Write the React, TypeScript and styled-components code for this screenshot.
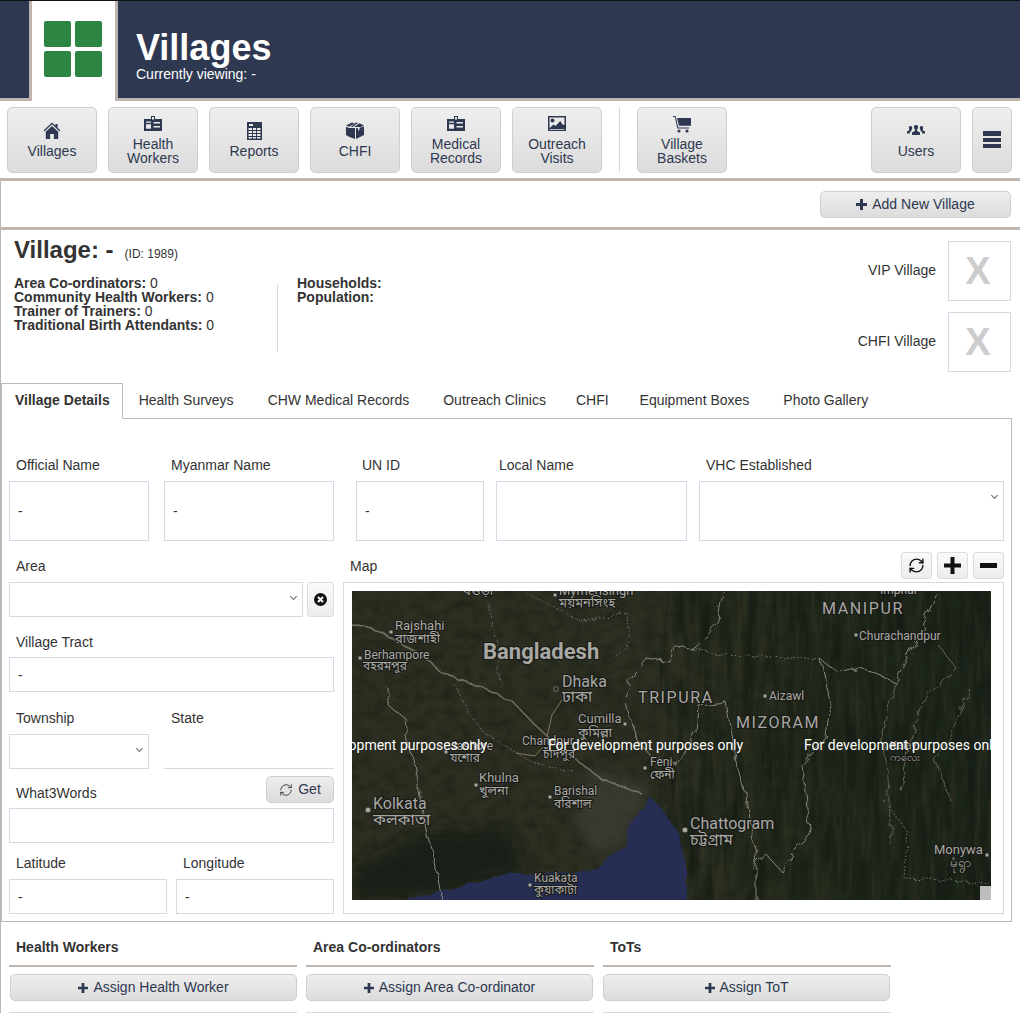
import React from 'react';
import styled, { createGlobalStyle } from 'styled-components';
import { RefreshCw } from 'lucide-react';

const TAN = '#bdb5ae';
const NAVY = '#2e3850';
const FIELD_LINE = '#d5dae6';

const GlobalStyle = createGlobalStyle`
	html, body {
		margin: 0;
		height: 1013px;
		overflow: hidden;
		background: #fff;
		font-family: 'Liberation Sans', Arial, sans-serif;
		font-size: 14px;
		color: #333;
	}
	* { box-sizing: border-box; }
`;

const Header = styled.header`
	display: flex;
	height: 101px;
	border-top: 1px solid #111;
	border-bottom: 3px solid ${TAN};
	background: ${NAVY};
`;

const LogoTile = styled.div`
	display: grid;
	grid-template-columns: 27px 27px;
	grid-template-rows: 26px 26px;
	gap: 4px;
	align-content: start;
	width: 89px;
	height: 100px;
	margin-left: 29px;
	padding: 20px 0 0 12px;
	border-left: 3px solid ${TAN};
	border-right: 3px solid ${TAN};
	background: #fff;
`;

const LogoCell = styled.span`
	background: #2d8544;
	border-radius: 2px;
`;

const HeaderText = styled.div`
	margin-left: 18px;
	padding-top: 28px;
	color: #fff;
`;

const PageTitle = styled.h1`
	margin: 0;
	font-size: 36px;
	line-height: 38px;
	font-weight: bold;
`;

const SubTitle = styled.div`
	font-size: 14px;
	line-height: 14px;
`;

const Nav = styled.nav`
	display: flex;
	height: 80px;
	padding: 6px 8px 0 7px;
	border-bottom: 3px solid ${TAN};
`;

const NavButton = styled.button<{ $w?: number; $ml?: number; $iconOnly?: boolean }>`
	display: flex;
	flex-direction: column;
	align-items: center;
	justify-content: center;
	width: ${(p) => p.$w ?? 90}px;
	height: 66px;
	margin-left: ${(p) => p.$ml ?? 0}px;
	padding: 0;
	border: 1px solid #cfcfcf;
	border-radius: 5px;
	background: linear-gradient(#eeeeee, #dcdcdc);
	color: ${NAVY};
	font: 14px/14px 'Liberation Sans', Arial, sans-serif;
	svg { display: block; margin-bottom: ${(p) => (p.$iconOnly ? 0 : 4)}px; fill: ${NAVY}; }
`;

const NavDivider = styled.span`
	width: 1px;
	height: 65px;
	margin-left: 17px;
	background: #d8d8d8;
`;

const ActionBar = styled.div`
	display: flex;
	justify-content: flex-end;
	height: 49px;
	padding: 10px 9px 0 0;
	border-left: 1px solid ${TAN};
	border-bottom: 3px solid ${TAN};
`;

const SmallButton = styled.button<{ $w?: number }>`
	display: flex;
	align-items: center;
	justify-content: center;
	gap: 5px;
	flex: none;
	width: ${(p) => (p.$w ? `${p.$w}px` : '100%')};
	height: 27px;
	padding: 0 0 2px;
	border: 1px solid #cfcfcf;
	border-radius: 5px;
	background: linear-gradient(#eeeeee, #dcdcdc);
	color: ${NAVY};
	font: 14px/14px 'Liberation Sans', Arial, sans-serif;
	svg { display: block; margin-top: 2px; }
`;

const Content = styled.main`
	height: 783px;
	padding-right: 8px;
	border-left: 1px solid ${TAN};
`;

const Info = styled.section`
	display: flex;
	justify-content: space-between;
	height: 153px;
	padding: 0 1px 0 13px;
`;

const InfoLeft = styled.div`
	padding-top: 6px;
`;

const VillageTitle = styled.h2`
	display: flex;
	align-items: baseline;
	margin: 0;
	font-size: 24px;
	line-height: 28px;
	font-weight: bold;
	small {
		margin-left: 11px;
		font-size: 12px;
		font-weight: normal;
	}
`;

const StatsRow = styled.div`
	display: flex;
	margin-top: 8px;
`;

const StatCol = styled.div`
	line-height: 14px;
	b { font-weight: bold; }
`;

const StatDivider = styled.span`
	width: 1px;
	height: 68px;
	margin: 8px 19px 0 0;
	background: #d9d9d9;
`;

const StatsMain = styled(StatCol)`
	width: 263px;
`;

const Flags = styled.div`
	display: flex;
	flex-direction: column;
	gap: 11px;
	padding-top: 11px;
`;

const FlagRow = styled.div`
	display: flex;
	align-items: center;
	justify-content: flex-end;
	gap: 12px;
`;

const FlagLabel = styled.span`
	margin-top: -2px;
`;

const FlagBox = styled.div`
	display: flex;
	align-items: center;
	justify-content: center;
	width: 63px;
	height: 60px;
	padding-right: 3px;
	border: 1px solid ${FIELD_LINE};
	color: #cccccc;
	font-size: 38px;
	font-weight: bold;
`;

const Tabs = styled.div`
	display: flex;
	height: 35px;
`;

const Tab = styled.div<{ $active?: boolean; $pl?: number; $pr?: number }>`
	position: relative;
	z-index: 1;
	height: ${(p) => (p.$active ? 36 : 35)}px;
	padding: 0 ${(p) => p.$pr ?? 16}px 0 ${(p) => p.$pl ?? 16}px;
	margin-right: ${(p) => (p.$active ? -1 : 0)}px;
	border: ${(p) => (p.$active ? '1px solid #bbb' : '1px solid transparent')};
	border-bottom: ${(p) => (p.$active ? '1px solid #fff' : '0')};
	background: ${(p) => (p.$active ? '#fff' : 'transparent')};
	line-height: 33px;
	font-weight: ${(p) => (p.$active ? 'bold' : 'normal')};
`;

const Panel = styled.section`
	height: 504px;
	padding: 38px 7px 0 7px;
	border: 1px solid #bbb;
`;

const FieldRow = styled.div`
	display: flex;
`;

const Field = styled.div<{ $w: number; $ml?: number; $mt?: number }>`
	flex: none;
	width: ${(p) => p.$w}px;
	margin-left: ${(p) => p.$ml ?? 0}px;
	margin-top: ${(p) => p.$mt ?? 0}px;
`;

const Label = styled.label<{ $pl?: number; $mb?: number }>`
	display: block;
	height: 16px;
	margin-bottom: ${(p) => p.$mb ?? 8}px;
	padding-left: ${(p) => p.$pl ?? 7}px;
	line-height: 16px;
	white-space: nowrap;
`;

const Input = styled.input<{ $h?: number; $line?: boolean }>`
	display: block;
	width: 100%;
	height: ${(p) => p.$h ?? 35}px;
	padding: 0 8px;
	border: ${(p) => (p.$line ? '0' : `1px solid ${FIELD_LINE}`)};
	border-bottom: 1px solid ${FIELD_LINE};
	outline: 0;
	background: #fff;
	color: #333;
	font: 14px 'Liberation Sans', Arial, sans-serif;
`;

const SelectBox = styled.div<{ $h?: number; $chevronTop: number }>`
	position: relative;
	width: 100%;
	height: ${(p) => p.$h ?? 35}px;
	border: 1px solid ${FIELD_LINE};
	&::after {
		content: '';
		position: absolute;
		right: 6px;
		top: ${(p) => p.$chevronTop}px;
		width: 4px;
		height: 4px;
		border-right: 1px solid #666;
		border-bottom: 1px solid #666;
		transform: rotate(45deg);
	}
`;

const Columns = styled.div`
	display: flex;
	align-items: flex-start;
`;

const LeftCol = styled.div`
	flex: none;
	width: 325px;
	padding-top: 17px;
`;

const InputWithClear = styled.div`
	display: flex;
	gap: 4px;
`;

const ClearButton = styled.button`
	display: flex;
	align-items: center;
	justify-content: center;
	flex: none;
	width: 27px;
	height: 35px;
	padding: 0;
	border: 1px solid #dcdcdc;
	border-radius: 3px;
	background: linear-gradient(#fafafa, #ececec);
`;

const LabelRow = styled.div`
	display: flex;
	align-items: flex-end;
	justify-content: space-between;
	height: 27px;
	margin: 7px 0 5px;
`;

const MapCol = styled.div`
	flex: none;
	width: 661px;
	margin-left: 9px;
	padding-top: 11px;
`;

const MapHead = styled.div`
	display: flex;
	align-items: center;
	justify-content: space-between;
	height: 27px;
	margin-bottom: 3px;
`;

const MapTools = styled.div`
	display: flex;
	gap: 5px;
`;

const MapTool = styled.button`
	display: flex;
	align-items: center;
	justify-content: center;
	width: 31px;
	height: 27px;
	padding: 0;
	border: 1px solid #dcdcdc;
	border-radius: 3px;
	background: linear-gradient(#fafafa, #ececec);
	color: #111;
`;

const MapBox = styled.div`
	height: 332px;
	padding: 8px;
	border: 1px solid ${FIELD_LINE};
`;

const MapSvg = styled.svg`
	display: block;
	width: 639px;
	height: 309px;
`;

const Assign = styled.section`
	display: flex;
	gap: 9px;
	padding: 17px 0 0 8px;
`;

const AssignCol = styled.div`
	width: 288px;
`;

const AssignTitle = styled.h3`
	height: 28px;
	margin: 0 0 7px;
	padding-left: 7px;
	border-bottom: 2px solid ${TAN};
	font-size: 14px;
	line-height: 16px;
	font-weight: bold;
`;

const AssignButton = styled(SmallButton)<{ $ml?: number }>`
	width: 287px;
	margin-left: ${(p) => p.$ml ?? 1}px;
`;

const AssignRow = styled.div`
	height: 1px;
	margin-top: 11px;
	background: ${FIELD_LINE};
`;

const MapLabel = styled.text<{ $size?: number; $bold?: boolean; $spaced?: boolean }>`
	font-family: Roboto, 'Liberation Sans', 'Noto Sans Bengali', 'Noto Sans', sans-serif;
	font-size: ${(p) => p.$size ?? 12}px;
	font-weight: ${(p) => (p.$bold ? 700 : 400)};
	letter-spacing: ${(p) => (p.$spaced ? '1.6px' : '0')};
	fill: #a8a8a4;
	stroke: #191915;
	stroke-width: 2px;
	paint-order: stroke;
`;

const Watermark = styled.text`
	font-family: Roboto, 'Liberation Sans', sans-serif;
	font-size: 14px;
	fill: #fff;
`;

const PlusIcon = ({ size = 11 }: { size?: number }) => (
	<svg width={size} height={size} viewBox="0 0 11 11" fill={NAVY}>
		<path d="M4 0h3v4h4v3H7v4H4V7H0V4h4z" />
	</svg>
);

const HomeIcon = () => (
	<svg width="18" height="18" viewBox="0 0 18 18">
		<path d="M9 0.5 0.5 8.6l.9.9L9 2.3l7.6 7.2.9-.9L14.6 5.8V2h-2.2v1.7z" />
		<path d="M9 4 2.8 9.8V17h4.3v-5h3.8v5h4.3V9.8z" />
	</svg>
);

const CardIcon = () => (
	<svg width="18" height="18" viewBox="0 -1 18 18">
		<path
			fillRule="evenodd"
			d="M7 0h4v3h7v12H0V3h7zM8 1v2.600h2V1zM2 8.200v4.600h5V8.200zM9.500 6v1.500H16V6zM9.500 10v1.500H16V10zM2 5.600v1.200h5V5.600z"
		/>
	</svg>
);

const ReportIcon = () => (
	<svg width="15" height="18" viewBox="0 0 15 18">
		<path
			fillRule="evenodd"
			d="M0 0h15v18H0zM2 2v2h4V2zM1.500 6v2h3.600V6zM6 6v2h3V6zM10 6v2h3.500V6zM1.500 9v2h3.600V9zM6 9v2h3V9zM10 9v2h3.500V9zM1.500 12v2h3.600v-2zM6 12v2h3v-2zM10 12v2h3.500v-2zM1.500 15v1.500h3.600V15zM6 15v1.500h3V15zM10 15v1.500h3.500V15z"
		/>
	</svg>
);

const BoxIcon = () => (
	<svg width="18" height="18" viewBox="0 0 18 18">
		<path d="M0 3.500 6 .5l2.500 1L3 4.800zM10 .5l2 .5L6.500 5 4.600 5zM13.500 1.300 18 3.500 14.500 5h-1l-1.200-.1L8 5z" />
		<path d="M0 4.800 3 6h6V17l-6-2.300L0 13zM10 6.200l2-.1v2.700l1.500-1V5.800L18 4.500V13l-8 4z" />
	</svg>
);

const PictureIcon = () => (
	<svg width="18" height="18" viewBox="0 -1 18 18">
		<path
			fillRule="evenodd"
			d="M0 0h18v15H0zM1.500 1.500v10.800l4-3.800 2 1.500 4.800-5 2.200 3.500 2 .6V1.500zM4.500 2.500a2 2 0 1 1 0 4 2 2 0 0 1 0-4zM1.500 13v.8h15V13z"
		/>
	</svg>
);

const CartIcon = () => (
	<svg width="18" height="18" viewBox="0 -1 18 18">
		<path d="M0 0h2.600l2.700 11.500H16v1H4.400L1.800 1H0z" />
		<path d="M4 2h14v7.800H6z" />
		<circle cx="6" cy="15" r="1.600" />
		<circle cx="14" cy="15" r="1.600" />
	</svg>
);

const UsersIcon = () => (
	<svg width="18" height="18" viewBox="0 -3 18 18">
		<path d="M9 0a2 2 0 0 1 2 2.300c0 1-.5 2-1 2.500v1l3 1.700V10H5V7.500l3-1.700v-1c-.5-.5-1-1.500-1-2.500A2 2 0 0 1 9 0z" />
		<path d="M3.500 1a1.700 1.700 0 0 1 1.700 2c0 1-.4 1.700-.8 2v1L2.900 7v1.500H0V6.600L2.600 5c-.4-.4-.8-1.100-.8-2A1.700 1.700 0 0 1 3.500 1zM14.500 1a1.700 1.700 0 0 1 1.700 2c0 .9-.4 1.600-.8 2L18 6.600v1.900h-2.900V7l-1.500-1V5c-.4-.3-.8-1-.8-2a1.700 1.700 0 0 1 1.700-2z" />
	</svg>
);

const BarsIcon = () => (
	<svg width="18" height="18" viewBox="0 0 18 18">
		<path d="M0 0h18v5H0zM0 7h18v4H0zM0 13h18v4H0z" />
	</svg>
);

const ClearIcon = () => (
	<svg width="13" height="13" viewBox="0 0 13 13">
		<circle cx="6.500" cy="6.500" r="6.500" fill="#111" />
		<path d="M4 4l5 5M9 4l-5 5" stroke="#fff" strokeWidth="2" />
	</svg>
);

const placeLabels: { x: number; y: number; t: string; size?: number; bold?: boolean; spaced?: boolean }[] = [
	{ x: 463, y: 595, t: 'বগুড়া', size: 13 },
	{ x: 559, y: 595, t: 'Mymensingh', size: 13 },
	{ x: 559, y: 607, t: 'ময়মনসিংহ', size: 13 },
	{ x: 880, y: 594, t: 'Imphal', size: 12 },
	{ x: 395, y: 630, t: 'Rajshahi', size: 13 },
	{ x: 395, y: 643, t: 'রাজশাহী', size: 13 },
	{ x: 364, y: 659, t: 'Berhampore' },
	{ x: 363, y: 670, t: 'বহরমপুর' },
	{ x: 483, y: 659, t: 'Bangladesh', size: 22, bold: true },
	{ x: 562, y: 687, t: 'Dhaka', size: 16 },
	{ x: 562, y: 702, t: 'ঢাকা', size: 16 },
	{ x: 638, y: 703, t: 'TRIPURA', size: 16, spaced: true },
	{ x: 769, y: 700, t: 'Aizawl' },
	{ x: 736, y: 728, t: 'MIZORAM', size: 16, spaced: true },
	{ x: 822, y: 614, t: 'MANIPUR', size: 16, spaced: true },
	{ x: 859, y: 640, t: 'Churachandpur' },
	{ x: 578, y: 723, t: 'Cumilla', size: 13 },
	{ x: 578, y: 737, t: 'কুমিল্লা', size: 13 },
	{ x: 522, y: 745, t: 'Chandpur', size: 12 },
	{ x: 543, y: 758, t: 'চাঁদপুর', size: 12 },
	{ x: 450, y: 750, t: 'Jashore', size: 12 },
	{ x: 450, y: 762, t: 'যশোর', size: 12 },
	{ x: 479, y: 782, t: 'Khulna', size: 13 },
	{ x: 479, y: 795, t: 'খুলনা', size: 13 },
	{ x: 554, y: 795, t: 'Barishal' },
	{ x: 554, y: 808, t: 'বরিশাল' },
	{ x: 373, y: 809, t: 'Kolkata', size: 16 },
	{ x: 373, y: 825, t: 'কলকাতা', size: 16 },
	{ x: 690, y: 829, t: 'Chattogram', size: 16 },
	{ x: 690, y: 845, t: 'চট্টগ্রাম', size: 16 },
	{ x: 650, y: 766, t: 'Feni' },
	{ x: 650, y: 779, t: 'ফেনী' },
	{ x: 534, y: 882, t: 'Kuakata' },
	{ x: 534, y: 894, t: 'কুয়াকাটা', size: 12 },
	{ x: 890, y: 749, t: 'Kalay', size: 11 },
	{ x: 890, y: 761, t: 'ကလေး', size: 11 },
	{ x: 934, y: 854, t: 'Monywa', size: 13 },
	{ x: 950, y: 867, t: 'မုံရွာ', size: 13 },
];

const placeDots: [number, number][] = [
	[391, 632], [360, 658], [555, 595], [765, 696], [856, 635], [625, 724], [446, 752],
	[476, 785], [550, 797], [645, 768], [530, 885], [987, 855],
];

const bigDots: [number, number][] = [[368, 810], [685, 830]];

const MapPicture = () => (
	<MapSvg viewBox="352 591 639 309">
		<defs>
			<filter id="fine" x="0" y="0" width="100%" height="100%" colorInterpolationFilters="sRGB">
				<feTurbulence type="fractalNoise" baseFrequency="0.07 0.1" numOctaves="3" seed="4" />
				<feColorMatrix values="0 0 0 0 0.11  0 0 0 0 0.13  0 0 0 0 0.08  2 0 0 0 -0.75" />
			</filter>
			<filter id="ridgesLight" x="0" y="0" width="100%" height="100%" colorInterpolationFilters="sRGB">
				<feTurbulence type="fractalNoise" baseFrequency="0.16 0.022" numOctaves="3" seed="9" />
				<feColorMatrix values="0 0 0 0 0.24  0 0 0 0 0.23  0 0 0 0 0.15  2.4 0 0 0 -1.1" />
			</filter>
			<filter id="ridgesDark" x="0" y="0" width="100%" height="100%" colorInterpolationFilters="sRGB">
				<feTurbulence type="fractalNoise" baseFrequency="0.09 0.014" numOctaves="3" seed="21" />
				<feColorMatrix values="0 0 0 0 0.07  0 0 0 0 0.1  0 0 0 0 0.07  2.4 0 0 0 -0.9" />
			</filter>
			<filter id="soft" x="-20%" y="-20%" width="140%" height="140%">
				<feGaussianBlur stdDeviation="7" />
			</filter>
			<filter id="wiggle" x="0" y="0" width="100%" height="100%">
				<feTurbulence type="fractalNoise" baseFrequency="0.09" numOctaves="2" seed="7" result="n" />
				<feDisplacementMap in="SourceGraphic" in2="n" scale="9" />
			</filter>
			<filter id="coast" x="0" y="0" width="100%" height="100%">
				<feTurbulence type="fractalNoise" baseFrequency="0.05" numOctaves="2" seed="3" result="n" />
				<feDisplacementMap in="SourceGraphic" in2="n" scale="7" />
			</filter>
			<linearGradient id="land" x1="0" x2="1" y1="0" y2="0">
				<stop offset="0" stopColor="#2e2f22" />
				<stop offset="0.45" stopColor="#2c2f22" />
				<stop offset="0.7" stopColor="#222a1d" />
				<stop offset="1" stopColor="#1b251b" />
			</linearGradient>
		</defs>
		<rect x="352" y="591" width="639" height="309" fill="url(#land)" />
		<rect x="352" y="591" width="639" height="309" filter="url(#fine)" opacity="0.7" />
		<rect x="660" y="591" width="331" height="309" filter="url(#ridgesDark)" opacity="0.7" />
		<rect x="660" y="591" width="331" height="309" filter="url(#ridgesLight)" opacity="0.45" />
		<path d="M427 832 L510 830 L522 872 L437 892 L360 900 L352 870Z" fill="#181e15" opacity="0.8" filter="url(#soft)" />
		<path d="M590 770 L650 785 L630 835 L600 860 L575 825Z" fill="#43423a" opacity="0.6" filter="url(#soft)" />
		<path
			d="M394 905 L437 890 L480 882 L509 873 L522 873 L583 872 L600 865 L626 845 L626 828 L643 808 L648 795 L661 808 L678 832 L687 865 L687 905Z"
			fill="#262e53"
			filter="url(#coast)"
		/>
		<g fill="none" stroke="#85877c" strokeWidth="1" filter="url(#wiggle)">
			<path d="M348 623 L383 633 L429 660 L440 672 L483 688 L513 702 L535 725 L557 745 L600 778 L643 795" stroke="#6f7064" strokeWidth="1.500" />
			<path d="M388 688 L388 705 L407 720 L405 735 L414 762 L416 775 L427 835 L433 852 L442 900" />
			<path d="M624 695 L635 672 L646 658 L670 662 L674 647 L695 648 L717 625 L721 602 L726 586" />
			<path d="M624 702 L639 742 L652 758 L678 765 L696 732 L698 705 L726 702 L735 758 L748 805 L756 862 L756 905" />
			<path d="M821 660 L830 702 L826 738 L802 765 L810 835 L795 848 L782 872 L765 853 L752 868" />
			<path d="M821 660 L839 673 L860 668 L895 682 L938 595" />
			<path d="M895 682 L882 732 L888 778 L891 845" stroke="#5f5f50" />
			<path d="M938 645 L956 668 L921 705 L912 735 L900 790" stroke="#6b6850" />
			<path d="M970 690 L950 735 L935 760 L950 800" stroke="#5f5f50" />
			<g strokeDasharray="1.500 2" stroke="#777a70">
				<path d="M455 685 L470 715 L483 732 L531 762 L574 772" />
				<path d="M487 602 L496 638 L500 685" />
				<path d="M526 593 L583 622 L626 612 L630 645 L609 658" />
				<path d="M791 658 L821 660" />
				<path d="M882 798 L908 832 L904 878 L990 882" />
				<path d="M690 648 L720 655 L791 658" />
			</g>
		</g>
		<path d="M516 753 L535 756 L545 745 L552 715 L562 700" fill="none" stroke="#85765a" strokeWidth="1" />
		<g fill="#a8a8a4" stroke="#191915" strokeWidth="0.500">
			{placeDots.map(([cx, cy]) => (
				<circle key={`${cx}-${cy}`} cx={cx} cy={cy} r="2" />
			))}
			{bigDots.map(([cx, cy]) => (
				<circle key={`${cx}-${cy}`} cx={cx} cy={cy} r="2.800" />
			))}
			<circle cx="556" cy="689" r="2.500" fill="none" stroke="#a8a8a4" />
		</g>
		{placeLabels.map((l) => (
			<MapLabel key={l.t} x={l.x} y={l.y} $size={l.size} $bold={l.bold} $spaced={l.spaced}>
				{l.t}
			</MapLabel>
		))}
		<Watermark x="292" y="750">For development purposes only</Watermark>
		<Watermark x="548" y="750">For development purposes only</Watermark>
		<Watermark x="804" y="750">For development purposes only</Watermark>
		<rect x="980" y="886" width="11" height="14" fill="#bdbdbd" />
	</MapSvg>
);

const App: React.FC = () => {
	return (
		<>
			<GlobalStyle />
			<Header>
				<LogoTile>
					<LogoCell />
					<LogoCell />
					<LogoCell />
					<LogoCell />
				</LogoTile>
				<HeaderText>
					<PageTitle>Villages</PageTitle>
					<SubTitle>Currently viewing: -</SubTitle>
				</HeaderText>
			</Header>

			<Nav>
				<NavButton><HomeIcon />Villages</NavButton>
				<NavButton $ml={11}><CardIcon />Health<br />Workers</NavButton>
				<NavButton $ml={11}><ReportIcon />Reports</NavButton>
				<NavButton $ml={11}><BoxIcon />CHFI</NavButton>
				<NavButton $ml={11}><CardIcon />Medical<br />Records</NavButton>
				<NavButton $ml={11}><PictureIcon />Outreach<br />Visits</NavButton>
				<NavDivider />
				<NavButton $ml={17}><CartIcon />Village<br />Baskets</NavButton>
				<NavButton $ml={144}><UsersIcon />Users</NavButton>
				<NavButton $w={40} $ml={11} $iconOnly><BarsIcon /></NavButton>
			</Nav>

			<ActionBar>
				<SmallButton $w={191}><PlusIcon />Add New Village</SmallButton>
			</ActionBar>

			<Content>
				<Info>
					<InfoLeft>
						<VillageTitle>Village: -<small>(ID: 1989)</small></VillageTitle>
						<StatsRow>
							<StatsMain>
								<div><b>Area Co-ordinators:</b> 0</div>
								<div><b>Community Health Workers:</b> 0</div>
								<div><b>Trainer of Trainers:</b> 0</div>
								<div><b>Traditional Birth Attendants:</b> 0</div>
							</StatsMain>
							<StatDivider />
							<StatCol>
								<div><b>Households:</b></div>
								<div><b>Population:</b></div>
							</StatCol>
						</StatsRow>
					</InfoLeft>
					<Flags>
						<FlagRow><FlagLabel>VIP Village</FlagLabel><FlagBox>X</FlagBox></FlagRow>
						<FlagRow><FlagLabel>CHFI Village</FlagLabel><FlagBox>X</FlagBox></FlagRow>
					</Flags>
				</Info>

				<Tabs>
					<Tab $active $pl={13} $pr={12}>Village Details</Tab>
					<Tab>Health Surveys</Tab>
					<Tab>CHW Medical Records</Tab>
					<Tab>Outreach Clinics</Tab>
					<Tab $pl={12} $pr={13}>CHFI</Tab>
					<Tab>Equipment Boxes</Tab>
					<Tab>Photo Gallery</Tab>
				</Tabs>

				<Panel>
					<FieldRow>
						<Field $w={140}><Label>Official Name</Label><Input $h={60} readOnly value="-" /></Field>
						<Field $w={170} $ml={15}><Label>Myanmar Name</Label><Input $h={60} readOnly value="-" /></Field>
						<Field $w={128} $ml={22}><Label $pl={6}>UN ID</Label><Input $h={60} readOnly value="-" /></Field>
						<Field $w={191} $ml={12}><Label $pl={3}>Local Name</Label><Input $h={60} readOnly value="" /></Field>
						<Field $w={305} $ml={12}><Label>VHC Established</Label><SelectBox $h={60} $chevronTop={11} /></Field>
					</FieldRow>

					<Columns>
						<LeftCol>
							<Label>Area</Label>
							<InputWithClear>
								<SelectBox $chevronTop={11} />
								<ClearButton><ClearIcon /></ClearButton>
							</InputWithClear>

							<Field $w={325} $mt={17}>
								<Label $mb={7}>Village Tract</Label>
								<Input readOnly value="-" />
							</Field>

							<FieldRow>
								<Field $w={140} $mt={18}><Label>Township</Label><SelectBox $chevronTop={11} /></Field>
								<Field $w={170} $ml={15} $mt={18}><Label>State</Label><Input $line readOnly value="" /></Field>
							</FieldRow>

							<LabelRow>
								<Label $mb={2}>What3Words</Label>
								<SmallButton $w={68}><RefreshCw size={14} strokeWidth={1.5} color="#333" />Get</SmallButton>
							</LabelRow>
							<Input readOnly value="" />

							<FieldRow>
								<Field $w={158} $mt={12}><Label>Latitude</Label><Input readOnly value="-" /></Field>
								<Field $w={158} $ml={9} $mt={12}><Label>Longitude</Label><Input readOnly value="-" /></Field>
							</FieldRow>
						</LeftCol>

						<MapCol>
							<MapHead>
								<Label $mb={0}>Map</Label>
								<MapTools>
									<MapTool><RefreshCw size={17} strokeWidth={2} /></MapTool>
									<MapTool>
										<svg width="17" height="17" viewBox="0 0 17 17" fill="#111"><path d="M6.500 0h4v6.500H17v4h-6.500V17h-4v-6.500H0v-4h6.500z" /></svg>
									</MapTool>
									<MapTool>
										<svg width="17" height="5" viewBox="0 0 17 5" fill="#111"><path d="M0 0h17v5H0z" /></svg>
									</MapTool>
								</MapTools>
							</MapHead>
							<MapBox><MapPicture /></MapBox>
						</MapCol>
					</Columns>
				</Panel>

				<Assign>
					<AssignCol>
						<AssignTitle>Health Workers</AssignTitle>
						<AssignButton><PlusIcon size={10} />Assign Health Worker</AssignButton>
						<AssignRow />
					</AssignCol>
					<AssignCol>
						<AssignTitle>Area Co-ordinators</AssignTitle>
						<AssignButton $ml={0}><PlusIcon size={10} />Assign Area Co-ordinator</AssignButton>
						<AssignRow />
					</AssignCol>
					<AssignCol>
						<AssignTitle>ToTs</AssignTitle>
						<AssignButton $ml={0}><PlusIcon size={10} />Assign ToT</AssignButton>
						<AssignRow />
					</AssignCol>
				</Assign>
			</Content>
		</>
	);
};

export default App;
